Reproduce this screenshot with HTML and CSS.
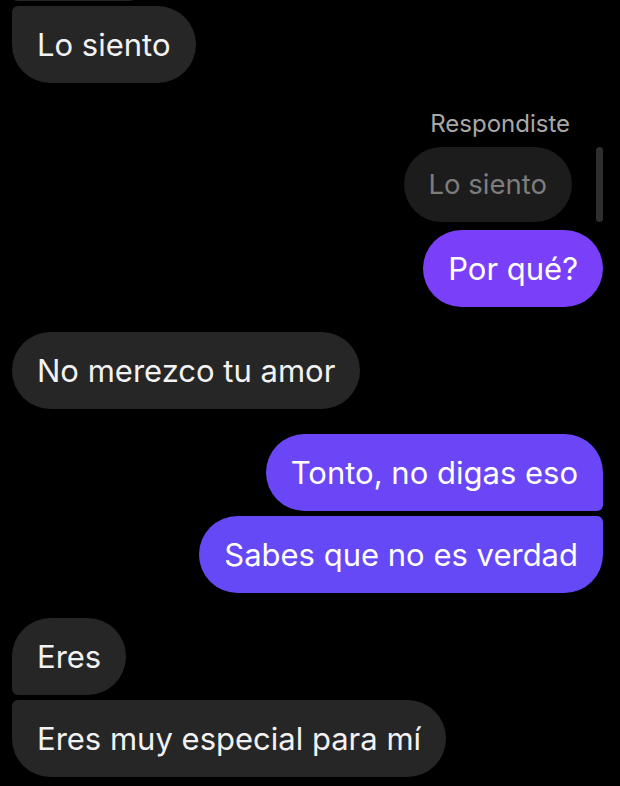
FILE: index.html
```html
<!DOCTYPE html>
<html lang="es">
<head>
  <meta charset="UTF-8">
  <meta name="viewport" content="width=device-width, initial-scale=1.0">
  <title>Chat</title>
  <link rel="stylesheet" href="styles.css">
</head>
<body>
  <div class="chat">
    <div class="row in prev">
      <div class="bubble theirs first"></div>
    </div>
    <div class="row in">
      <div class="bubble theirs last">Lo siento</div>
    </div>

    <div class="reply">
      <div class="reply-label">Respondiste</div>
      <div class="reply-row">
        <div class="reply-bubble">Lo siento</div>
        <div class="reply-bar"></div>
      </div>
    </div>
    <div class="row out tight">
      <div class="bubble mine c1">Por qué?</div>
    </div>

    <div class="row in spaced">
      <div class="bubble theirs">No merezco tu amor</div>
    </div>

    <div class="row out spaced">
      <div class="bubble mine c2 first">Tonto, no digas eso</div>
    </div>
    <div class="row out grouped">
      <div class="bubble mine c3 last">Sabes que no es verdad</div>
    </div>

    <div class="row in spaced">
      <div class="bubble theirs first">Eres</div>
    </div>
    <div class="row in grouped">
      <div class="bubble theirs last">Eres muy especial para mí</div>
    </div>
  </div>
</body>
</html>
```

FILE: styles.css
```css
body {
  margin: 0;
  background-color: #000;
  font-family: Inter, Roboto, "Liberation Sans", sans-serif;
  color: #f2f2f2;
  overflow: hidden;
}
.chat {
  display: flex;
  flex-direction: column;
  padding: 0 17px 0 12px;
}
.row {
  display: flex;
}
.row.in {
  justify-content: flex-start;
  margin-top: 5px;
}
.row.out {
  justify-content: flex-end;
}
.row.prev {
  margin-top: -76px;
}
.row.spaced,
.row.in.spaced {
  margin-top: 25px;
}
.row.grouped {
  margin-top: 5px;
}
.row.tight {
  margin-top: 8px;
}
.bubble {
  height: 77px;
  line-height: 77px;
  padding: 0 25px;
  font-size: 31px;
  border-radius: 39px;
  white-space: nowrap;
}
.theirs {
  background-color: #262626;
}
.mine {
  color: #fff;
}
.c1 {
  background-color: #7a3ff8;
}
.c2 {
  background-color: #6a46f7;
}
.c3 {
  background-color: #6548f6;
}
.in .first {
  border-bottom-left-radius: 6px;
}
.in .last {
  border-top-left-radius: 6px;
}
.out .first {
  border-bottom-right-radius: 6px;
}
.out .last {
  border-top-right-radius: 6px;
}
.prev .bubble {
  width: 102px;
}
.reply {
  display: flex;
  flex-direction: column;
  align-items: flex-end;
  margin-top: 28px;
}
.reply-label {
  font-size: 24px;
  line-height: 26px;
  color: #a8a8a8;
  padding-right: 33px;
}
.reply-row {
  display: flex;
  gap: 24px;
  margin-top: 10px;
}
.reply-bubble {
  height: 75px;
  line-height: 75px;
  padding: 0 25px;
  font-size: 27.5px;
  border-radius: 38px;
  background-color: #1c1c1c;
  color: #7d7d7d;
}
.reply-bar {
  width: 7px;
  height: 75px;
  border-radius: 4px;
  background-color: #2e2e2e;
}
```
